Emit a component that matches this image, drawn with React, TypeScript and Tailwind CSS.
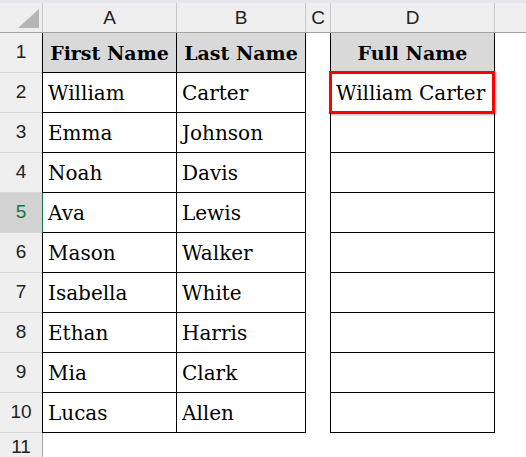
import React from "react";

const rows: [string, string][] = [
  ["William", "Carter"],
  ["Emma", "Johnson"],
  ["Noah", "Davis"],
  ["Ava", "Lewis"],
  ["Mason", "Walker"],
  ["Isabella", "White"],
  ["Ethan", "Harris"],
  ["Mia", "Clark"],
  ["Lucas", "Allen"],
];

const sans = { fontFamily: '"Liberation Sans", Arial, sans-serif' };
const serif = { fontFamily: '"DejaVu Serif", serif' };

function RowHeader({ n, selected }: { n: number; selected?: boolean }) {
  return (
    <div
      style={sans}
      className={
        "w-[42px] shrink-0 flex items-center justify-center text-[19px] border-b border-[#d6d6d6] " +
        (selected ? "bg-[#d2d2d2] text-[#1e7145]" : "bg-[#efefef] text-[#222]")
      }
    >
      {n}
    </div>
  );
}

export default function App() {
  return (
    <div className="w-[526px] h-[457px] bg-white overflow-hidden flex flex-col">
      <div className="h-[3px] shrink-0 bg-[#e6e6eb]" />
      {/* column header */}
      <div style={sans} className="h-[30px] shrink-0 flex text-[19px] text-[#222] bg-[#efefef] border-b border-[#a3a3a3]">
        <div className="w-[43px] shrink-0 border-r border-[#c8c8c8] relative">
          <svg className="absolute left-0 top-0" width="42" height="29">
            <polygon points="39,6 39,25 18,25" fill="#b5b5b5" />
          </svg>
        </div>
        <div className="w-[134px] shrink-0 border-r border-[#c8c8c8] flex items-center justify-center pt-[2px]">A</div>
        <div className="w-[129px] shrink-0 border-r border-[#c8c8c8] flex items-center justify-center pt-[2px]">B</div>
        <div className="w-[25px] shrink-0 border-r border-[#c8c8c8] flex items-center justify-center pt-[2px]">C</div>
        <div className="w-[164px] shrink-0 border-r border-[#c8c8c8] flex items-center justify-center pt-[2px]">D</div>
        <div className="w-[31px] shrink-0" />
      </div>
      {/* row 1 */}
      <div style={serif} className="h-[40px] shrink-0 flex text-[19px] text-black">
        <RowHeader n={1} />
        <div className="w-[135px] shrink-0 bg-[#d9d9d9] border-l border-r border-b border-black flex items-center justify-center font-bold pt-[1px]">
          First Name
        </div>
        <div className="w-[129px] shrink-0 bg-[#d9d9d9] border-r border-b border-black flex items-center justify-center font-bold pt-[1px]">
          Last Name
        </div>
        <div className="w-[24px] shrink-0" />
        <div className="w-[165px] shrink-0 bg-[#d9d9d9] border-l border-r border-b border-black flex items-center justify-center font-bold pt-[1px]">
          Full Name
        </div>
        <div className="w-[31px] shrink-0" />
      </div>
      {rows.map(([first, last], i) => {
        const n = i + 2;
        const selected = n === 5;
        return (
          <div key={n} style={serif} className="h-[40px] shrink-0 flex text-[20px] text-black">
            <RowHeader n={n} selected={selected} />
            <div
              className={
                "w-[135px] shrink-0 border-l border-r border-b border-r-black border-b-black flex items-center pl-[5px] " +
                (selected ? "border-l-[#1e7145]" : "border-l-black")
              }
            >
              {first}
            </div>
            <div className="w-[129px] shrink-0 border-r border-b border-black flex items-center pl-[5px]">{last}</div>
            <div className="w-[24px] shrink-0" />
            <div className="w-[165px] shrink-0 border-l border-r border-b border-black flex items-center pl-[5px] relative">
              {n === 2 && (
                <>
                  <span className="whitespace-nowrap">William Carter</span>
                  <div className="absolute left-[-2px] top-[-2px] w-[166px] h-[43px] border-[3px] border-[#ff0000] shadow-[1px_1px_2px_rgba(0,0,0,0.35)]" />
                </>
              )}
            </div>
            <div className="w-[31px] shrink-0" />
          </div>
        );
      })}
      {/* row 11 */}
      <div className="h-[25px] shrink-0 flex">
        <div style={sans} className="w-[42px] shrink-0 bg-[#efefef] text-[#222] text-[19px] flex items-center justify-center pt-[4px]">
          11
        </div>
        <div className="w-[1px] bg-[#a3a3a3]" />
        <div className="flex-1" />
      </div>
    </div>
  );
}
